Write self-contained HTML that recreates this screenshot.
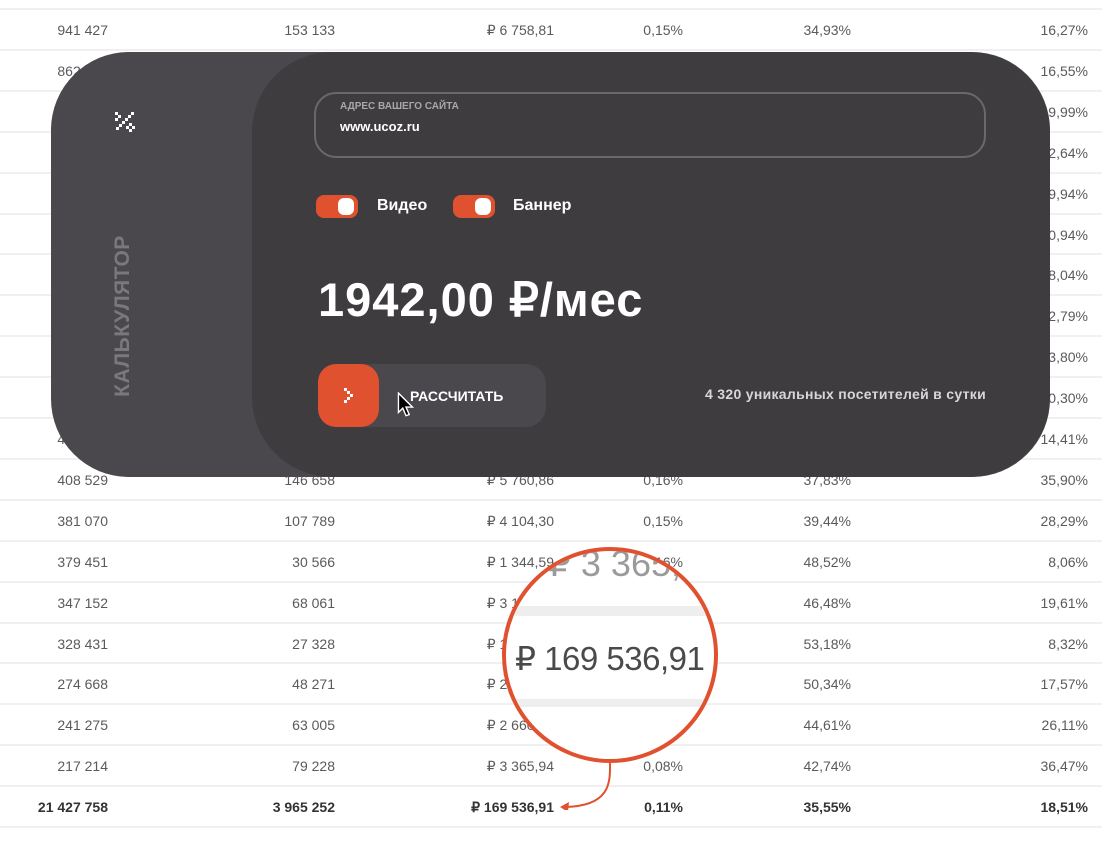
<!DOCTYPE html>
<html><head><meta charset="utf-8"><style>
body{margin:0;width:1102px;height:828px;overflow:hidden;background:#fff;font-family:"Liberation Sans",sans-serif;position:relative}
.row{position:absolute;left:0;width:1102px;height:41px;border-top:2px solid #f0f0f0;box-sizing:border-box}
.c{position:absolute;top:12px;font-size:14px;color:#5a5a5a;text-align:right;white-space:nowrap}
.b .c{font-weight:bold;color:#333}
#calc{position:absolute;left:51px;top:52px;width:999px;height:425px;background:#4a484c;border-radius:78px;overflow:hidden}
#inner{position:absolute;left:201px;top:0;width:798px;height:425px;background:#3e3c3f;border-radius:80px}
.w{color:#fff;font-weight:bold}
</style></head><body>
<div id="t"></div>
<script>
var d=[["941 427","153 133","₽ 6 758,81","0,15%","34,93%","16,27%"],["862 512","140 220","₽ 6 120,44","0,14%","33,10%","16,55%"],["","","","","","9,99%"],["","","","","","2,64%"],["","","","","","9,94%"],["","","","","","0,94%"],["","","","","","8,04%"],["","","","","","2,79%"],["","","","","","3,80%"],["","","","","","0,30%"],["441 210","","","","","14,41%"],["408 529","146 658","₽ 5 760,86","0,16%","37,83%","35,90%"],["381 070","107 789","₽ 4 104,30","0,15%","39,44%","28,29%"],["379 451","30 566","₽ 1 344,59","0,16%","48,52%","8,06%"],["347 152","68 061","₽ 3 102,10","0,12%","46,48%","19,61%"],["328 431","27 328","₽ 1 201,55","0,13%","53,18%","8,32%"],["274 668","48 271","₽ 2 140,07","0,14%","50,34%","17,57%"],["241 275","63 005","₽ 2 660,12","0,11%","44,61%","26,11%"],["217 214","79 228","₽ 3 365,94","0,08%","42,74%","36,47%"],["21 427 758","3 965 252","₽ 169 536,91","0,11%","35,55%","18,51%"]];
var R=[108,335,554,683,851,1088],h="";
d.forEach(function(r,i){h+='<div class="row'+(i==19?' b':'')+'" style="top:'+(8+i*40.9)+'px">';r.forEach(function(v,j){h+='<div class="c" style="right:'+(1102-R[j])+'px">'+v+'</div>'});h+='</div>'});
h+='<div class="row" style="top:826px"></div>';
document.getElementById('t').innerHTML=h;
</script>
<div id="calc">
<svg style="position:absolute;left:62px;top:58px" width="24" height="24" viewBox="0 0 24 24" fill="#fff"><rect x="2" y="2" width="3" height="3"/><rect x="5" y="5" width="3" height="3"/><rect x="2" y="8" width="3" height="3"/><rect x="18" y="2" width="3" height="3"/><rect x="15" y="5" width="3" height="3"/><rect x="12" y="8" width="3" height="3"/><rect x="9" y="11" width="3" height="3"/><rect x="6" y="14" width="3" height="3"/><rect x="3" y="17" width="3" height="3"/><rect x="16" y="13" width="3" height="3"/><rect x="13" y="16" width="3" height="3"/><rect x="19" y="16" width="3" height="3"/><rect x="16" y="19" width="3" height="3"/></svg>
<div style="position:absolute;left:72px;top:264px;transform:translate(-50%,-50%) rotate(-90deg);font-size:21px;font-weight:bold;color:#7a787c;letter-spacing:0.5px;white-space:nowrap">КАЛЬКУЛЯТОР</div>
<div id="inner">
<div style="position:absolute;left:62px;top:40px;width:672px;height:66px;border:2px solid #6a686c;border-radius:22px;box-sizing:border-box"></div>
<div style="position:absolute;left:88px;top:49px;font-size:10px;font-weight:bold;color:#a9a7ab">АДРЕС ВАШЕГО САЙТА</div>
<div style="position:absolute;left:88px;top:67px;font-size:13px" class="w">www.ucoz.ru</div>
<div style="position:absolute;left:64px;top:143px;width:42px;height:23px;background:#e0512f;border-radius:8px"><div style="position:absolute;right:4px;top:3px;width:16px;height:17px;background:#fff;border-radius:6px"></div></div>
<div style="position:absolute;left:125px;top:145px;font-size:16px" class="w">Видео</div>
<div style="position:absolute;left:201px;top:143px;width:42px;height:23px;background:#e0512f;border-radius:8px"><div style="position:absolute;right:4px;top:3px;width:16px;height:17px;background:#fff;border-radius:6px"></div></div>
<div style="position:absolute;left:261px;top:145px;font-size:16px" class="w">Баннер</div>
<div style="position:absolute;left:66px;top:220px;font-size:47px;letter-spacing:1px" class="w">1942,00 ₽/мес</div>
<div style="position:absolute;left:66px;top:312px;width:228px;height:63px;background:#4a484c;border-radius:20px"></div>
<div style="position:absolute;left:66px;top:312px;width:61px;height:63px;background:#e0512f;border-radius:18px"><svg style="position:absolute;left:26px;top:24px" width="10" height="16" fill="#fff"><rect x="0" y="0" width="3" height="3"/><rect x="3" y="3" width="3" height="3"/><rect x="6" y="6" width="3" height="3"/><rect x="3" y="9" width="3" height="3"/><rect x="0" y="12" width="3" height="3"/></svg></div>
<div style="position:absolute;left:158px;top:336px;font-size:14px" class="w">РАССЧИТАТЬ</div>
<svg style="position:absolute;left:145px;top:340px" width="18" height="28" viewBox="0 0 16 26"><path d="M1 1 L1 19 L5 15 L8 22 L11 21 L8 14 L14 14 Z" fill="#000" stroke="#fff" stroke-width="1.3"/></svg>
<div style="position:absolute;right:64px;top:334px;font-size:14px;letter-spacing:0.3px;color:#d8d6da;font-weight:bold">4 320 уникальных посетителей в сутки</div>
</div></div>
<div style="position:absolute;left:502px;top:547px;width:216px;height:216px;border-radius:50%;border:4px solid #e0512f;box-sizing:border-box;background:#fff;overflow:hidden">
<div style="position:absolute;left:42px;top:-8px;font-size:36px;color:#9a9a9a;white-space:nowrap">₽ 3 365,9</div>
<div style="position:absolute;left:0;top:55px;width:216px;height:10px;background:#eee"></div>
<div style="position:absolute;left:0;top:148px;width:216px;height:8px;background:#eee"></div>
<div style="position:absolute;left:9px;top:88px;font-size:33px;color:#4a4a4a;white-space:nowrap;letter-spacing:-0.5px">₽ 169 536,91</div>
</div>
<svg style="position:absolute;left:555px;top:760px" width="60" height="50"><path d="M55 0 C55 20 58 46 10 47" stroke="#e0512f" stroke-width="2" fill="none"/><path d="M5 47 L14 42 L13 52 Z" fill="#e0512f"/></svg>
</body></html>
